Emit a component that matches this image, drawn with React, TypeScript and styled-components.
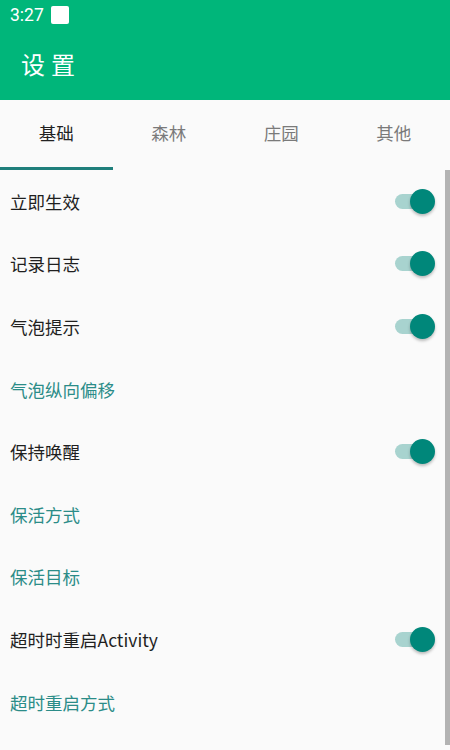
import React, {useState} from 'react';
import styled, {createGlobalStyle} from 'styled-components';

const GlobalStyle = createGlobalStyle`
    html, body {
        margin: 0;
        padding: 0;
        background: #fafafa;
        font-family: Roboto, "Noto Sans CJK SC", sans-serif;
    }
`;

const Page = styled.div`
    width: 450px;
    height: 750px;
    display: flex;
    flex-direction: column;
    overflow: hidden;
    background: #fafafa;
`;

const Header = styled.header`
    background: #00b67a;
    color: #fff;
    height: 100px;
    display: flex;
    flex-direction: column;
`;

const StatusBar = styled.div`
    height: 30px;
    display: flex;
    align-items: center;
    gap: 7px;
    padding-left: 10px;
    font-size: 17.5px;
`;

const Notice = styled.span`
    width: 18px;
    height: 18px;
    background: #fff;
    border-radius: 2px;
`;

const Title = styled.h1`
    margin: 0;
    flex: 1;
    display: flex;
    align-items: center;
    padding-left: 21px;
    padding-bottom: 4px;
    font-size: 24px;
    font-weight: 400;
    letter-spacing: 6px;
    font-family: "Noto Sans CJK SC", sans-serif;
`;

const TabBar = styled.nav`
    height: 70px;
    display: grid;
    grid-template-columns: repeat(4, 1fr);
`;

const Tab = styled.button<{ $active: boolean }>`
    border: none;
    background: none;
    padding: 0 0 2px;
    font-size: 17.5px;
    font-family: "Noto Sans CJK SC", sans-serif;
    color: ${p => p.$active ? '#222' : '#7a7a7a'};
    border-bottom: 3px solid ${p => p.$active ? '#1f7f7b' : 'transparent'};
    cursor: pointer;
`;

const Body = styled.div`
    flex: 1;
    display: flex;
`;

const List = styled.div`
    flex: 1;
`;

const Row = styled.div`
    height: 62.6px;
    display: flex;
    align-items: center;
    justify-content: space-between;
    padding: 0 12px 0 10px;
`;

const Label = styled.span<{ $link?: boolean }>`
    font-size: 17.5px;
    font-family: "Noto Sans CJK SC", sans-serif;
    color: ${p => p.$link ? '#2b8c88' : '#1f1f1f'};
`;

const SwitchTrack = styled.span`
    position: relative;
    width: 34px;
    height: 15px;
    border-radius: 8px;
    background: #a8d3cf;
    margin-right: 4px;
`;

const SwitchThumb = styled.span`
    position: absolute;
    right: -6px;
    top: -5px;
    width: 25px;
    height: 25px;
    border-radius: 50%;
    background: #00877a;
    box-shadow: 0 2px 3px rgba(0, 0, 0, 0.25);
`;

const ScrollBar = styled.div`
    width: 5px;
    margin-bottom: 5px;
    background: #b3b3b3;
`;

const tabs = ['基础', '森林', '庄园', '其他'];

const items = [
    {label: '立即生效', toggle: true},
    {label: '记录日志', toggle: true},
    {label: '气泡提示', toggle: true},
    {label: '气泡纵向偏移', toggle: false},
    {label: '保持唤醒', toggle: true},
    {label: '保活方式', toggle: false},
    {label: '保活目标', toggle: false},
    {label: '超时时重启Activity', toggle: true},
    {label: '超时重启方式', toggle: false},
];

const App = () => {
    const [tab, setTab] = useState(0);

    return (
        <Page>
            <GlobalStyle/>
            <Header>
                <StatusBar>3:27<Notice/></StatusBar>
                <Title>设置</Title>
            </Header>
            <TabBar>
                {tabs.map((t, i) =>
                    <Tab key={t} $active={i === tab} onClick={() => setTab(i)}>{t}</Tab>
                )}
            </TabBar>
            <Body>
                <List>
                    {items.map(item =>
                        <Row key={item.label}>
                            <Label $link={!item.toggle}>{item.label}</Label>
                            {item.toggle && <SwitchTrack><SwitchThumb/></SwitchTrack>}
                        </Row>
                    )}
                </List>
                <ScrollBar/>
            </Body>
        </Page>
    );
};

export default App;
